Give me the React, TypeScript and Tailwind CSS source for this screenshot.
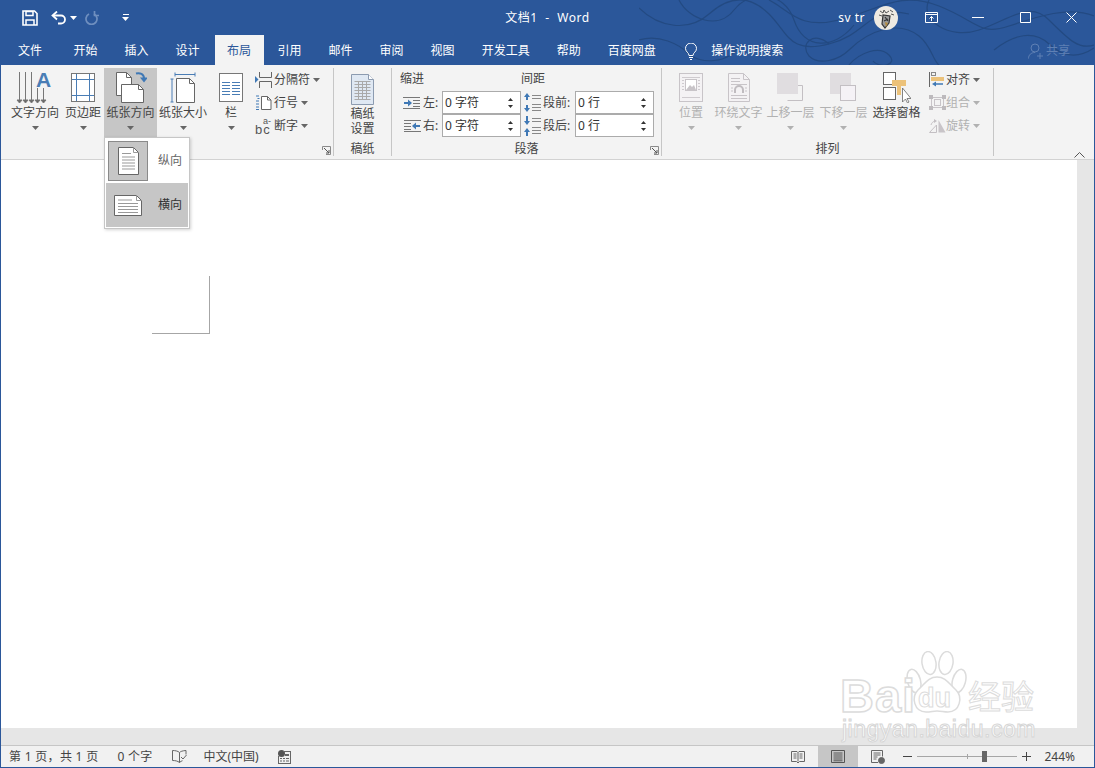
import type { ReactNode } from "react"

const tabs = ["开始", "插入", "设计", "布局", "引用", "邮件", "审阅", "视图", "开发工具", "帮助", "百度网盘"]

function Caret({ color = "#666" }: { color?: string }) {
  return (
    <svg width="7" height="4" viewBox="0 0 7 4" className="shrink-0">
      <path d="M0 0h7L3.5 4z" fill={color} />
    </svg>
  )
}

function Launcher() {
  return (
    <svg width="9" height="9" viewBox="0 0 9 9" className="absolute right-[2px] bottom-[1px]" fill="none">
      <path d="M.5 4V.5h8v8H4" stroke="#8a8a8a" />
      <path d="M2 2l5 5M4 7h3V4" stroke="#555" />
    </svg>
  )
}

function TextDirIcon() {
  const arrows = [
    [2, 1],
    [8, 1],
    [14, 1],
    [20, 17],
    [26, 17],
  ]
  return (
    <svg width="36" height="34" viewBox="0 0 36 34" fill="none" className="overflow-visible">
      {arrows.map(([x, y]) => (
        <g key={x} stroke="#777">
          <path d={`M${x + 0.5} ${y}V31`} />
          <path d={`M${x - 2} 29l2.5 3 2.5-3z`} fill="#666" />
        </g>
      ))}
      <text x="19" y="16" fontSize="21" fontWeight="700" fill="#4a7db5" fontFamily="Liberation Sans, sans-serif">A</text>
    </svg>
  )
}

function MarginsIcon() {
  return (
    <svg width="24" height="29" viewBox="0 0 24 29" fill="none">
      <rect x=".5" y=".5" width="23" height="28" fill="#fff" stroke="#777" />
      <path d="M5.5 1v27M18.5 1v27M1 6.5h22M1 22.5h22" stroke="#4a7db5" />
    </svg>
  )
}

function OrientationIcon() {
  return (
    <svg width="32" height="33" viewBox="0 0 32 33" fill="none">
      <path d="M1.5 1.5h10l5 5v18h-15z" fill="#fff" stroke="#666" />
      <path d="M11.5 1.5v5h5" stroke="#666" />
      <path d="M6.5 13.5h17l5 5v13h-22z" fill="#fff" stroke="#666" />
      <path d="M23.5 13.5v5h5" stroke="#666" />
      <path d="M21 2.5c4-1 8 .5 8 5" stroke="#3f78b5" strokeWidth="2" />
      <path d="M25 6.5h8l-4 5z" fill="#3f78b5" />
    </svg>
  )
}

function PaperSizeIcon() {
  return (
    <svg width="26" height="32" viewBox="0 0 26 32" fill="none">
      <path d="M5 2.5h20M5 .5v4M25 .5v4" stroke="#4a7db5" />
      <path d="M.5 7h3M2 7v23M.5 30h3" stroke="#4a7db5" />
      <path d="M6.5 6.5h13l5 5v19h-18z" fill="#fff" stroke="#666" />
      <path d="M19.5 6.5v5h5" stroke="#666" />
    </svg>
  )
}

function ColumnsIcon() {
  return (
    <svg width="24" height="29" viewBox="0 0 24 29" fill="none">
      <rect x=".5" y=".5" width="23" height="28" fill="#fff" stroke="#777" />
      <path d="M3 9.5h8M13 9.5h8M3 12.5h8M13 12.5h8M3 15.5h8M13 15.5h8M3 18.5h8M13 18.5h8M3 21.5h8M13 21.5h8" stroke="#4a7db5" />
    </svg>
  )
}

function BreaksIcon() {
  return (
    <svg width="17" height="16" viewBox="0 0 17 16" fill="none">
      <path d="M4.5 0v5.5h12V0M4.5 16v-6.5h12V16" stroke="#666" />
      <path d="M0 4l3.5 3.5L0 11z" fill="#3f78b5" />
    </svg>
  )
}

function LineNumIcon() {
  return (
    <svg width="17" height="16" viewBox="0 0 17 16" fill="none">
      <path d="M1 1h3M2.5 3.5h2M1 6h3M1 9h3M1 12h3M1 14.5h3" stroke="#3f78b5" />
      <path d="M6.5 1.5h6l3.5 3.5v9.500h-9.500z" fill="#fff" stroke="#666" />
      <path d="M12.500 1.500v3.500h3.500" stroke="#666" />
    </svg>
  )
}

function HyphenIcon() {
  return (
    <svg width="18" height="18" viewBox="0 0 18 18" fontFamily="Liberation Sans, sans-serif" fill="#555" className="overflow-visible">
      <text x="0" y="17" fontSize="13" letterSpacing="1">bc</text>
      <text x="8" y="7" fontSize="9">a-</text>
    </svg>
  )
}

function GridPaperIcon() {
  return (
    <svg width="25" height="33" viewBox="0 0 25 33" fill="none">
      <path d="M1.500 1.500h17l5 5v25h-22z" fill="#dfe8f3" stroke="#8c9bb0" />
      <path d="M18.500 1.500v5h5" fill="#fff" stroke="#8c9bb0" />
      <path d="M4.500 8.500h16M4.500 11.500h16M4.500 14.500h16M4.500 17.500h16M4.500 20.500h16M4.500 23.500h16M4.500 26.500h16M8.500 8v19M12.500 8v19M16.500 8v19" stroke="#a9a9a9" />
    </svg>
  )
}

function IndentIcon({ flip = false }: { flip?: boolean }) {
  return (
    <svg width="18" height="12" viewBox="0 0 18 12" fill="none" className={flip ? "-scale-x-100" : ""}>
      <path d="M0 .5h17M10 3.500h7M10 6.500h7M10 9.500h7M0 11.500h17" stroke="#777" />
      <path d="M1 6h5" stroke="#3f78b5" strokeWidth="2" />
      <path d="M5 2.500l4 3.500-4 3.500z" fill="#3f78b5" />
    </svg>
  )
}

function SpacingIcon({ after = false }: { after?: boolean }) {
  return (
    <svg width="18" height="20" viewBox="0 0 18 20" fill="none">
      <path d="M9 2.500h9M9 5.500h9M9 14.500h9M9 17.500h9M9 11.500h9" stroke="#888" />
      {after ? (
        <>
          <path d="M4 0v6" stroke="#3f78b5" strokeWidth="2" />
          <path d="M1 5h6L4 9zM1 16h6L4 12z" fill="#3f78b5" />
          <path d="M4 15v5" stroke="#3f78b5" strokeWidth="2" />
        </>
      ) : (
        <>
          <path d="M1 4h6L4 0zM1 15h6l-3 4z" fill="#3f78b5" />
          <path d="M4 3v4M4 12v4" stroke="#3f78b5" strokeWidth="2" />
        </>
      )}
    </svg>
  )
}

function PositionIcon() {
  return (
    <svg width="24" height="29" viewBox="0 0 24 29" fill="none">
      <rect x=".5" y=".5" width="23" height="28" fill="#f4f2f4" stroke="#c8c4c8" />
      <path d="M3 4.500h18M3 24.500h18M3 7.500h2M19 7.500h2M3 10.500h2M19 10.500h2M3 13.500h2M19 13.500h2M3 16.500h2M19 16.500h2" stroke="#cfcbcf" />
      <rect x="6.500" y="6.500" width="11" height="11" fill="#fff" stroke="#c8c4c8" />
      <path d="M7 17l4-5 2 2 2-2 2 5z" fill="#c8c4c8" />
    </svg>
  )
}

function WrapIcon() {
  return (
    <svg width="22" height="29" viewBox="0 0 22 29" fill="none">
      <path d="M.5.500h15l6 6v22h-21z" fill="#f4f2f4" stroke="#c8c4c8" />
      <path d="M15.500.500v6h6M3 5.500h9M3 8.500h9M3 11.500h16M3 22.500h16M3 25.500h16M3 15h2M17 15h2M3 18h2M17 18h2" stroke="#c8c4c8" />
      <path d="M7 20v-3a4 4 0 0 1 8 0v3" stroke="#c0bcc0" strokeWidth="2" />
    </svg>
  )
}

function LayerIcon({ back = false }: { back?: boolean }) {
  return (
    <svg width="27" height="29" viewBox="0 0 27 29" fill="none">
      {back ? (
        <>
          <rect x="0" y="0" width="21" height="21" fill="#e0dde0" />
          <rect x="10.500" y="12.500" width="15" height="15" fill="#f5f2f6" stroke="#c3bfc3" />
        </>
      ) : (
        <>
          <path d="M10.500 12.500h15v15h-15" stroke="#c3bfc3" />
          <rect x="0" y="0" width="21" height="21" fill="#e0dde0" />
        </>
      )}
    </svg>
  )
}

function SelectionPaneIcon() {
  return (
    <svg width="28" height="31" viewBox="0 0 28 31" fill="none">
      <rect x=".5" y=".5" width="12" height="12" fill="#fff" stroke="#666" />
      <rect x=".5" y="15.500" width="12" height="12" fill="#fff" stroke="#666" />
      <path d="M9 8h14v6h-5v9h-4V14H9z" fill="#ecc27a" />
      <path d="M19.500 16v14l3-3 2 4 1.500-1-2-3.500h4z" fill="#fff" stroke="#666" strokeWidth=".8" />
    </svg>
  )
}

function AlignIcon() {
  return (
    <svg width="16" height="15" viewBox="0 0 16 15" fill="none">
      <path d="M.500 0v15" stroke="#666" />
      <rect x="2.500" y=".5" width="4" height="3" stroke="#888" />
      <rect x="2" y="5" width="13" height="4" fill="#ecc27a" />
      <path d="M5 12h9" stroke="#3f78b5" strokeWidth="1.500" />
      <path d="M7 9.500l-4 2.500 4 2.500z" fill="#3f78b5" />
    </svg>
  )
}

function GroupIcon() {
  return (
    <svg width="17" height="15" viewBox="0 0 17 15" fill="none">
      <path d="M0 0h4v4H0zM13 0h4v4h-4zM0 11h4v4H0zM13 11h4v4h-4z" fill="#bdbabd" />
      <path d="M2.500 4v7M14.500 4v7M4 2.500h9M4 12.500h9" stroke="#c8c4c8" />
      <rect x="5.500" y="4.500" width="6" height="6" stroke="#c8c4c8" />
    </svg>
  )
}

function RotateIcon() {
  return (
    <svg width="17" height="15" viewBox="0 0 17 15" fill="none">
      <path d="M.500 14.500L7.500 7v7.500z" stroke="#c3bfc3" />
      <path d="M9.500 14.500V2l7 12.500z" fill="#c8c4c8" />
      <path d="M2 7c.5-2 2-3.500 4-4" stroke="#c3bfc3" />
      <path d="M5 1l3 2-3 2z" fill="#c3bfc3" />
    </svg>
  )
}

function BigButton({
  icon,
  label,
  className = "",
  active = false,
  disabled = false,
  caret = true,
}: {
  icon: ReactNode
  label: string
  className?: string
  active?: boolean
  disabled?: boolean
  caret?: boolean
}) {
  return (
    <div className={`flex h-[69px] flex-col items-center ${active ? "bg-[#c6c6c6]" : ""} ${className}`}>
      <div className="flex h-[37px] items-center justify-center pt-[2px]">{icon}</div>
      <div className={`whitespace-nowrap text-[12px] leading-[16px] ${disabled ? "text-[#b1b1b1]" : "text-[#444]"}`}>
        {label}
      </div>
      {caret && (
        <div className="mt-[5px]">
          <Caret color={disabled ? "#b1b1b1" : "#666"} />
        </div>
      )}
    </div>
  )
}

function SmallRow({
  icon,
  label,
  disabled = false,
  iconWidth = "w-[19px]",
}: {
  icon: ReactNode
  label: string
  disabled?: boolean
  iconWidth?: string
}) {
  return (
    <div className="flex h-[23px] items-center">
      <div className={`flex shrink-0 justify-start ${iconWidth}`}>{icon}</div>
      <span className={`text-[12px] ${disabled ? "text-[#b1b1b1]" : "text-[#444]"}`}>{label}</span>
      <span className="ml-[3px]">
        <Caret color={disabled ? "#b1b1b1" : "#666"} />
      </span>
    </div>
  )
}

function Spinner({ value }: { value: string }) {
  return (
    <div className="flex h-[23px] w-[79px] items-center justify-between border border-[#ababab] bg-white pr-[7px] pl-[2px] text-[12px] text-[#333]">
      <span className="whitespace-pre">{value}</span>
      <div className="flex flex-col gap-[4px]">
        <svg width="5" height="3" viewBox="0 0 5 3"><path d="M0 3h5L2.500 0z" fill="#333" /></svg>
        <svg width="5" height="3" viewBox="0 0 5 3"><path d="M0 0h5L2.500 3z" fill="#333" /></svg>
      </div>
    </div>
  )
}

function Group({ width, label, launcher, children }: { width: string; label: string; launcher?: boolean; children: ReactNode }) {
  return (
    <div className={`relative flex h-[88px] shrink-0 flex-col border-r border-[#c6c6c6] ${width}`}>
      <div className="flex h-[73px]">{children}</div>
      <div className="text-center text-[12px] leading-[15px] text-[#444]">{label}</div>
      {launcher && <Launcher />}
    </div>
  )
}

function Swirls() {
  return (
    <svg width="455" height="65" viewBox="0 0 455 65" fill="none" stroke="#234a82" strokeWidth="1.200" className="absolute top-0 right-0">
      <path d="M0 8c20 20 50 24 70 6s40-20 60 0 20 40 60 30 40-40 80-30" />
      <path d="M40 0c10 20 40 30 55 10s50-20 60 10 40 30 60 5" />
      <path d="M190 44c-15-14-30 0-20 12 10 10 30 4 40-6 20-20 50-30 70-14s10 40 40 29" />
      <path d="M130 0c20 10 30 30 70 20s60-30 100-14 40 30 70 20 60-20 85-10" />
      <path d="M290 0c-10 20 20 40 50 30s50-30 70-10 30 30 45 25" />
      <path d="M355 50c20-16 40-20 55-6s30 14 45 4" />
      <path d="M210 65c10-12 30-20 40-10s-10 14-16 6" />
      <path d="M0 40c20-6 40 4 50 14s40 10 50-8" />
    </svg>
  )
}

function Avatar() {
  return (
    <svg width="24" height="24" viewBox="0 0 24 24" className="shrink-0">
      <circle cx="12" cy="12" r="12" fill="#eeeae2" />
      <path d="M6 5l3 2 1-3 2 3 3-2M16 4l3 2M5 9l3 1M17 8l3 1" stroke="#555" strokeWidth="1" fill="none" />
      <path d="M9 9l-1 9 3 4 4-5 1-7zM11 11l3 4M10 15l4-2" stroke="#333" strokeWidth="1.200" fill="#9a9a9a" />
      <path d="M11 16l3 1-2 4z" fill="#b58b3c" />
    </svg>
  )
}

function BaiduMark() {
  return (
    <div className="pointer-events-none absolute top-[651px] left-[839px] h-[95px] w-[200px] font-['Liberation_Sans',sans-serif]">
      <svg width="62" height="62" viewBox="0 0 62 62" fill="#fff" stroke="#dcdcdc" strokeWidth="1.500" className="absolute top-0 left-[65px]">
        <ellipse cx="9" cy="30" rx="6.500" ry="12" transform="rotate(-15 9 30)" />
        <ellipse cx="24" cy="12" rx="7" ry="11.500" transform="rotate(-8 24 12)" />
        <ellipse cx="41" cy="12" rx="7" ry="11.500" transform="rotate(8 41 12)" />
        <ellipse cx="54" cy="30" rx="6.500" ry="12" transform="rotate(15 54 30)" />
        <path d="M32 26c-9 0-12 7-19 13-7 7-4 22 8 22 5 0 7-1 11-1s7 1 11 1c12 0 15-15 8-22-7-6-10-13-19-13z" />
      </svg>
      <div className="absolute top-[25px] left-0 text-[47px] font-bold leading-[40px] tracking-[1px] text-white [-webkit-text-stroke:1.500px_#dcdcdc]">Bai</div>
      <div className="absolute top-[36px] left-[78px] text-[27px] font-bold leading-[22px] text-white [-webkit-text-stroke:1px_#dcdcdc]">du</div>
      <div className="absolute top-[25px] left-[128px] font-['Noto_Sans_CJK_SC',sans-serif] text-[33px] leading-[38px] text-white [-webkit-text-stroke:1px_#dcdcdc]">经验</div>
      <div className="absolute top-[66px] left-[2px] whitespace-nowrap text-[23px] leading-[25px] tracking-[.5px] text-white [-webkit-text-stroke:1px_#d6d6d6]">jingyan.baidu.com</div>
    </div>
  )
}

export default function App() {
  return (
    <div className="relative flex h-[768px] w-[1095px] flex-col overflow-hidden border-x border-b border-[#2b579a] bg-[#e6e6e6] font-['Noto_Sans','Noto_Sans_CJK_SC',sans-serif]">
      <div className="relative flex h-[65px] shrink-0 flex-col bg-[#2b579a] text-white">
        <Swirls />
        {/* title bar */}
        <div className="relative grid h-[35px] grid-cols-[1fr_auto_1fr] items-center">
          <div className="flex items-center">
            <svg width="16" height="16" viewBox="0 0 16 16" fill="none" className="ml-[21px]">
              <path d="M1 1h11.500L15 3.500V15H1z" stroke="#fff" strokeWidth="1.600" />
              <path d="M4 1.500h7v4H4zM4 15v-5h8v5" stroke="#fff" strokeWidth="1.500" />
            </svg>
            <svg width="16" height="14" viewBox="0 0 16 14" fill="none" className="ml-[13px]">
              <path d="M2 4.500h8a4 4 0 0 1 0 8H7" stroke="#fff" strokeWidth="1.800" />
              <path d="M6 .5L1.500 4.500 6 8.500" stroke="#fff" strokeWidth="1.800" />
            </svg>
            <span className="ml-[3px]">
              <Caret color="#fff" />
            </span>
            <svg width="14" height="14" viewBox="0 0 14 14" fill="none" className="ml-[8px]" stroke="#6f8fbf" strokeWidth="1.700">
              <path d="M4 3a5.500 5.500 0 1 0 5 0" />
              <path d="M9.500 0v4.500H14" />
            </svg>
            <div className="ml-[23px] flex flex-col items-center gap-[2px]">
              <div className="h-[1px] w-[6px] bg-white" />
              <Caret color="#fff" />
            </div>
          </div>
          <div className="whitespace-pre text-[12px] tracking-[.6px]">文档1  -  Word</div>
          <div className="flex items-center justify-end">
            <span className="text-[12px] tracking-[.5px]">sv tr</span>
            <span className="ml-[9px]">
              <Avatar />
            </span>
            <svg width="13" height="11" viewBox="0 0 13 11" fill="none" stroke="#fff" className="ml-[27px]">
              <path d="M.5.500h12v10H.5zM.5 2.500h12" />
              <path d="M6.500 9V4.500M4.500 6.500l2-2 2 2" />
            </svg>
            <svg width="12" height="1" viewBox="0 0 12 1" className="ml-[34px]">
              <path d="M0 0h12v1H0z" fill="#fff" />
            </svg>
            <svg width="11" height="11" viewBox="0 0 11 11" fill="none" stroke="#fff" className="ml-[36px]">
              <path d="M.5.500h10v10H.5z" />
            </svg>
            <svg width="11" height="11" viewBox="0 0 11 11" fill="none" stroke="#fff" className="mr-[17px] ml-[35px]">
              <path d="M.5.500l10 10M10.500.500l-10 10" />
            </svg>
          </div>
        </div>
        {/* tabs */}
        <div className="relative flex h-[30px] items-stretch text-[12px]">
          <div className="flex w-[59px] items-center pt-[2px] pl-[17px]">文件</div>
          {tabs.map((t) =>
            t === "布局" ? (
              <div key={t} className="ml-[2px] flex items-center justify-center bg-[#f3f3f3] pt-[2px] pr-[13px] pl-[12px] text-[#2b579a]">
                {t}
              </div>
            ) : (
              <div key={t} className="flex items-center px-[13.5px] pt-[2px]">
                {t}
              </div>
            ),
          )}
          <div className="ml-[16px] flex items-center pt-[2px]">
            <svg width="12" height="17" viewBox="0 0 12 17" fill="none" stroke="#fff">
              <path d="M4 12.500c0-3-3.500-3.500-3.500-7a5.500 5.500 0 0 1 11 0c0 3.500-3.500 4-3.500 7z" />
              <path d="M4 14.500h4M5 16.500h2" />
            </svg>
            <span className="ml-[14px]">操作说明搜索</span>
          </div>
          <div className="mr-[24px] ml-auto flex items-center pt-[2px] text-[#5f80b4]">
            <svg width="15" height="16" viewBox="0 0 15 16" fill="none" stroke="#5f80b4">
              <circle cx="7" cy="5" r="4" />
              <path d="M.5 15.500c0-3.500 2.500-6 6.500-6M9 13h6M12 10v6" />
            </svg>
            <span className="ml-[3px]">共享</span>
          </div>
        </div>
      </div>

      {/* ribbon */}
      <div className="flex h-[95px] shrink-0 border-b border-[#d2d2d2] bg-[#f3f3f3] pt-[3px]">
        <Group width="w-[333px]" label="" launcher>
          <BigButton icon={<TextDirIcon />} label="文字方向" className="ml-[8px] w-[52px]" />
          <BigButton icon={<MarginsIcon />} label="页边距" className="ml-[1px] w-[42px]" />
          <BigButton icon={<OrientationIcon />} label="纸张方向" className="w-[53px]" active />
          <BigButton icon={<PaperSizeIcon />} label="纸张大小" className="w-[52px]" />
          <BigButton icon={<ColumnsIcon />} label="栏" className="w-[44px]" />
          <div className="ml-[2px] flex flex-col">
            <SmallRow icon={<BreaksIcon />} label="分隔符" />
            <SmallRow icon={<LineNumIcon />} label="行号" />
            <SmallRow icon={<HyphenIcon />} label="断字" />
          </div>
        </Group>
        <Group width="w-[58px]" label="稿纸">
          <div className="flex w-full flex-col items-center pt-[5px]">
            <GridPaperIcon />
            <div className="text-center text-[12px] leading-[15px] text-[#444]">
              稿纸
              <br />
              设置
            </div>
          </div>
        </Group>
        <Group width="w-[270px]" label="段落" launcher>
          <div className="flex flex-col pl-[8px]">
            <div className="flex h-[22px] items-center text-[12px] text-[#444]">
              <span className="w-[121px]">缩进</span>
              <span>间距</span>
            </div>
            <div className="flex flex-col pt-[1px]">
              <div className="flex items-center">
                <div className="ml-[3px] flex w-[20px]"><IndentIcon /></div>
                <span className="w-[19px] text-[12px] text-[#444]">左:</span>
                <Spinner value="0 字符" />
                <div className="ml-[2px] flex w-[20px]"><SpacingIcon /></div>
                <span className="w-[32px] text-[12px] text-[#444]">段前:</span>
                <Spinner value="0 行" />
              </div>
              <div className="flex items-center">
                <div className="ml-[3px] flex w-[20px]"><IndentIcon flip /></div>
                <span className="w-[19px] text-[12px] text-[#444]">右:</span>
                <Spinner value="0 字符" />
                <div className="ml-[2px] flex w-[20px]"><SpacingIcon after /></div>
                <span className="w-[32px] text-[12px] text-[#444]">段后:</span>
                <Spinner value="0 行" />
              </div>
            </div>
          </div>
        </Group>
        <Group width="w-[332px]" label="排列">
          <BigButton icon={<PositionIcon />} label="位置" className="ml-[6px] w-[46px]" disabled />
          <BigButton icon={<WrapIcon />} label="环绕文字" className="w-[49px]" disabled />
          <BigButton icon={<LayerIcon />} label="上移一层" className="ml-[1px] w-[53px]" disabled />
          <BigButton icon={<LayerIcon back />} label="下移一层" className="w-[53px]" disabled />
          <BigButton icon={<SelectionPaneIcon />} label="选择窗格" className="w-[53px]" caret={false} />
          <div className="ml-[6px] flex flex-col">
            <SmallRow icon={<AlignIcon />} label="对齐" iconWidth="w-[17px]" />
            <SmallRow icon={<GroupIcon />} label="组合" disabled iconWidth="w-[17px]" />
            <SmallRow icon={<RotateIcon />} label="旋转" disabled iconWidth="w-[17px]" />
          </div>
        </Group>
        <svg width="11" height="6" viewBox="0 0 11 6" fill="none" className="mt-[84px] mr-[9px] ml-auto">
          <path d="M.5 5.500l5-5 5 5" stroke="#555" />
        </svg>
      </div>

      {/* document */}
      <div className="flex min-h-0 flex-1">
        <div className="flex-1 bg-white pt-[116px]">
          <div className="ml-[151px] h-[58px] w-[58px] border-r border-b border-[#a6a6a6]" />
        </div>
        <div className="w-[17px] shrink-0" />
      </div>
      <div className="h-[17px] shrink-0" />

      {/* status bar */}
      <div className="flex h-[22px] shrink-0 items-center border-t border-[#c6c6c6] bg-[#f1f1f1] text-[12px] text-[#444]">
        <span className="ml-[8px] whitespace-pre tracking-[.3px]">第 1 页，共 1 页</span>
        <span className="ml-[19px] whitespace-pre tracking-[.25px]">0 个字</span>
        <svg width="15" height="14" viewBox="0 0 15 14" fill="none" stroke="#666" className="ml-[19px]">
          <path d="M7.500 2.500C6 1 3 .5.500.5v10c3 0 5 .5 7 2 1-1 2-1.500 3-1.800M7.500 2.500v10M7.500 2.500c1-1 3-1.800 6.500-2v4" />
          <path d="M9 7l2 2 3.500-4" />
        </svg>
        <span className="ml-[17px]">中文(中国)</span>
        <svg width="13" height="14" viewBox="0 0 13 14" className="ml-[19px]">
          <circle cx="3.500" cy="3.500" r="3.500" fill="#555" />
          <path d="M5 1h8v13H0V6h1v7h11V2H5z" fill="#666" />
          <path d="M2 8h2v1H2zM5 8h2v1H5zM8 8h3v1H8zM2 10.500h2v1H2zM5 10.500h2v1H5zM8 10.500h3v1H8zM7 4h4v2H7z" fill="#666" />
        </svg>
        <div className="ml-auto flex h-full items-center">
          <svg width="14" height="14" viewBox="0 0 14 14" fill="none" stroke="#666">
            <path d="M.5 1.500h5.500l1 1 1-1h5.500v10h-5l-1.500 1.500-1.500-1.500h-5zM7 2.500v9M2.500 4h3M2.500 6h3M2.500 8h3M8.500 4h3M8.500 6h3M8.500 8h3" />
          </svg>
          <div className="ml-[13px] flex h-full w-[40px] items-center justify-center bg-[#c6c6c6]">
            <svg width="14" height="13" viewBox="0 0 14 13" fill="none" stroke="#555">
              <path d="M.5.500h13v12H.5zM2.500 3h9M2.500 5h9M2.500 7h9M2.500 9h9M2.500 10.800h9" />
            </svg>
          </div>
          <svg width="14" height="14" viewBox="0 0 14 14" fill="none" stroke="#666" className="ml-[13px]">
            <path d="M7 12.500H.5V.5h11v6M2.500 3h7M2.500 5h7M2.500 7h4M2.500 9h3" />
            <circle cx="10.500" cy="10.500" r="3" fill="#666" />
          </svg>
          <div className="ml-[18px] h-[1px] w-[9px] bg-[#444]" />
          <div className="relative ml-[5px] h-[1px] w-[100px] bg-[#a6a6a6]">
            <div className="absolute top-[-2px] left-[50px] h-[5px] w-[1px] bg-[#a6a6a6]" />
            <div className="absolute top-[-5px] left-[65px] h-[11px] w-[5px] bg-[#666]" />
          </div>
          <div className="relative ml-[5px] h-[9px] w-[9px]">
            <div className="absolute top-[4px] left-0 h-[1px] w-[9px] bg-[#444]" />
            <div className="absolute top-0 left-[4px] h-[9px] w-[1px] bg-[#444]" />
          </div>
          <span className="mr-[19px] ml-[13px]">244%</span>
        </div>
      </div>

      {/* orientation dropdown */}
      <div className="absolute top-[137px] left-[103px] flex h-[92px] w-[86px] flex-col border border-[#c6c6c6] bg-white p-[1px] text-[12px] shadow-[1px_1px_3px_rgba(0,0,0,0.18)]">
        <div className="flex h-[44px] items-center pl-[2px]">
          <div className="flex h-[40px] w-[40px] items-center justify-center border border-[#8a8a8a] bg-[#c6c6c6]">
            <svg width="21" height="28" viewBox="0 0 21 28" fill="none">
              <path d="M.5.500h15l5 5v22H.5z" fill="#fff" stroke="#666" />
              <path d="M15.500.500v5h5M4 6.500h9M4 10h13M4 13h13M4 16h13M4 19h13M4 22h13" stroke="#999" />
            </svg>
          </div>
          <span className="ml-[10px] text-[#666]">纵向</span>
        </div>
        <div className="flex h-[44px] items-center bg-[#c6c6c6] pl-[8px]">
          <svg width="28" height="21" viewBox="0 0 28 21" fill="none">
            <path d="M.5.500h22l5 5v15H.5z" fill="#fff" stroke="#666" />
            <path d="M22.500.500v5h5M4 5h14M4 8.500h20M4 11.500h20M4 14.500h20M4 17.500h20" stroke="#999" />
          </svg>
          <span className="ml-[16px] text-[#333]">横向</span>
        </div>
      </div>

      <BaiduMark />
    </div>
  )
}
